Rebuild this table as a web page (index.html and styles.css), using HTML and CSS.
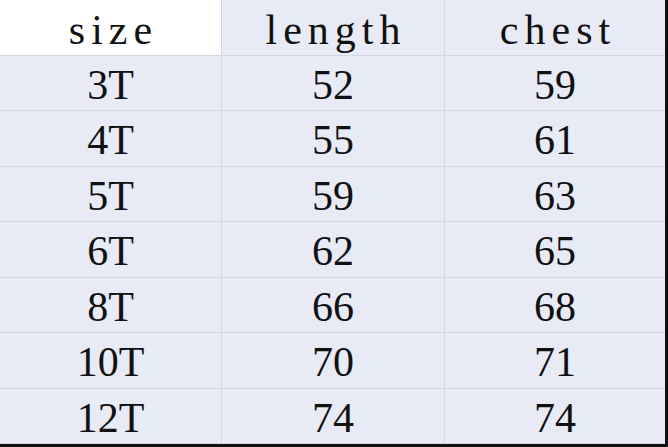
FILE: index.html
```html
<!DOCTYPE html>
<html>
<head>
<meta charset="utf-8">
<link rel="stylesheet" href="styles.css">
</head>
<body>
<div class="table">
  <div class="cell head white">size</div>
  <div class="cell head">length</div>
  <div class="cell head last">chest</div>
  <div class="cell">3T</div><div class="cell">52</div><div class="cell last">59</div>
  <div class="cell">4T</div><div class="cell">55</div><div class="cell last">61</div>
  <div class="cell">5T</div><div class="cell">59</div><div class="cell last">63</div>
  <div class="cell">6T</div><div class="cell">62</div><div class="cell last">65</div>
  <div class="cell">8T</div><div class="cell">66</div><div class="cell last">68</div>
  <div class="cell">10T</div><div class="cell">70</div><div class="cell last">71</div>
  <div class="cell">12T</div><div class="cell">74</div><div class="cell last">74</div>
</div>
</body>
</html>
```
FILE: styles.css
```css
html, body {
  margin: 0;
  padding: 0;
  background: #e8eaf5;
}
.table {
  width: 665px;
  height: 444px;
  display: grid;
  grid-template-columns: 222px 223px 220px;
  grid-template-rows: repeat(8, 1fr);
  border-right: 3px solid #111;
  border-bottom: 3px solid #111;
  background: #e8eaf5;
  font-family: "Liberation Serif", "Times New Roman", serif;
  font-size: 42px;
  color: #111;
}
.cell {
  display: flex;
  align-items: center;
  justify-content: center;
  padding-top: 4px;
  box-sizing: border-box;
  border-right: 1px solid #d2d5e3;
  border-bottom: 1px solid #d2d5e3;
  background: #e8eaf5;
}
.cell.last {
  border-right: none;
}
.head {
  letter-spacing: 6px;
  text-indent: 6px;
  padding-top: 6px;
}
.white {
  background: #ffffff;
}
```
